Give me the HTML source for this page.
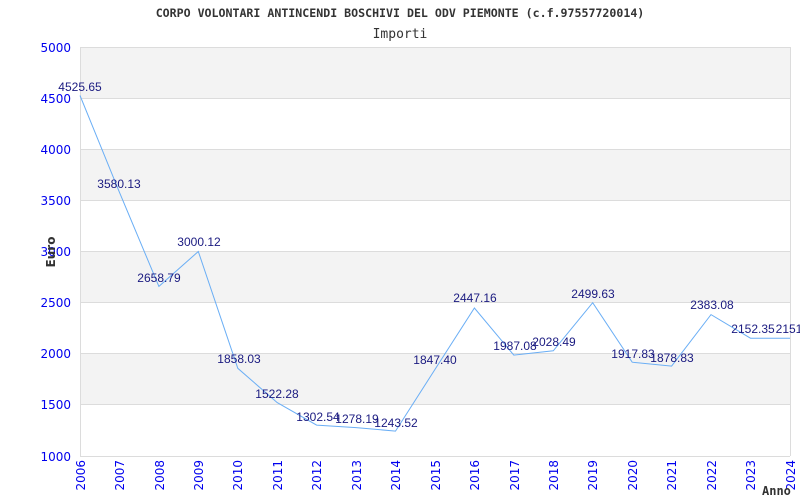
<!DOCTYPE html>
<html><head><style>body{margin:0;background:#fff}svg{display:block}</style></head><body>
<svg width="800" height="500" xmlns="http://www.w3.org/2000/svg">
<rect width="800" height="500" fill="#fff"/>
<g fill="#f3f3f3">
<rect x="80" y="47" width="710" height="51"/>
<rect x="80" y="149" width="710" height="51"/>
<rect x="80" y="251" width="710" height="51"/>
<rect x="80" y="353" width="710" height="52"/>
</g>
<g stroke="#dcdcdc" stroke-width="1">
<line x1="80" y1="47.5" x2="790" y2="47.5"/>
<line x1="80" y1="98.5" x2="790" y2="98.5"/>
<line x1="80" y1="149.5" x2="790" y2="149.5"/>
<line x1="80" y1="200.5" x2="790" y2="200.5"/>
<line x1="80" y1="251.5" x2="790" y2="251.5"/>
<line x1="80" y1="302.5" x2="790" y2="302.5"/>
<line x1="80" y1="353.5" x2="790" y2="353.5"/>
<line x1="80" y1="404.5" x2="790" y2="404.5"/>
<line x1="80" y1="456.5" x2="790" y2="456.5"/>
<line x1="80.5" y1="47" x2="80.5" y2="456"/>
<line x1="790.5" y1="47" x2="790.5" y2="456"/>
</g>
<text x="400" y="17" text-anchor="middle" font-family="DejaVu Sans Mono, monospace" font-size="11.6" font-weight="bold" fill="#333">CORPO VOLONTARI ANTINCENDI BOSCHIVI DEL ODV PIEMONTE (c.f.97557720014)</text>
<text x="400" y="38" text-anchor="middle" font-family="DejaVu Sans Mono, monospace" font-size="13" fill="#333">Importi</text>
<g font-family="DejaVu Sans, sans-serif" font-size="12" fill="#0000ee" text-anchor="end">
<text x="71" y="52">5000</text><text x="71" y="103">4500</text><text x="71" y="154">4000</text>
<text x="71" y="205">3500</text><text x="71" y="256">3000</text><text x="71" y="307">2500</text>
<text x="71" y="358">2000</text><text x="71" y="409">1500</text><text x="71" y="461">1000</text>
</g>
<g font-family="DejaVu Sans, sans-serif" font-size="12" fill="#0000ee" text-anchor="end">
<text transform="translate(85,460) rotate(-90)">2006</text>
<text transform="translate(124,460) rotate(-90)">2007</text>
<text transform="translate(164,460) rotate(-90)">2008</text>
<text transform="translate(203,460) rotate(-90)">2009</text>
<text transform="translate(242,460) rotate(-90)">2010</text>
<text transform="translate(282,460) rotate(-90)">2011</text>
<text transform="translate(321,460) rotate(-90)">2012</text>
<text transform="translate(361,460) rotate(-90)">2013</text>
<text transform="translate(400,460) rotate(-90)">2014</text>
<text transform="translate(440,460) rotate(-90)">2015</text>
<text transform="translate(479,460) rotate(-90)">2016</text>
<text transform="translate(519,460) rotate(-90)">2017</text>
<text transform="translate(558,460) rotate(-90)">2018</text>
<text transform="translate(597,460) rotate(-90)">2019</text>
<text transform="translate(637,460) rotate(-90)">2020</text>
<text transform="translate(676,460) rotate(-90)">2021</text>
<text transform="translate(716,460) rotate(-90)">2022</text>
<text transform="translate(755,460) rotate(-90)">2023</text>
<text transform="translate(795,460) rotate(-90)">2024</text>
</g>
<text transform="translate(55,252) rotate(-90)" text-anchor="middle" font-family="DejaVu Sans, sans-serif" font-size="12" font-weight="bold" fill="#333">Euro</text>
<text x="762" y="495" font-family="DejaVu Sans Mono, monospace" font-size="12" font-weight="bold" fill="#333">Anno</text>
<polyline fill="none" stroke="#6aaef5" stroke-width="1" points="80,95.5 119.4,192.2 158.9,286.4 198.3,251.5 237.8,368.3 277.2,402.6 316.6,425.1 356.1,427.6 395.5,431.1 435,369.4 474.4,308 513.8,355.1 553.3,350.8 592.7,302.7 632.2,362.2 671.6,366.1 711,314.6 750.5,338.2 790,338.3"/>
<g font-family="Liberation Sans, Arial, sans-serif" font-size="12" fill="#1a1a80" text-anchor="middle">
<text x="80" y="91">4525.65</text>
<text x="119" y="188">3580.13</text>
<text x="159" y="282">2658.79</text>
<text x="199" y="246">3000.12</text>
<text x="239" y="363">1858.03</text>
<text x="277" y="398">1522.28</text>
<text x="318" y="421">1302.54</text>
<text x="357" y="423">1278.19</text>
<text x="396" y="427">1243.52</text>
<text x="435" y="364">1847.40</text>
<text x="475" y="302">2447.16</text>
<text x="515" y="350">1987.08</text>
<text x="554" y="346">2028.49</text>
<text x="593" y="298">2499.63</text>
<text x="633" y="358">1917.83</text>
<text x="672" y="362">1878.83</text>
<text x="712" y="309">2383.08</text>
<text x="753" y="333">2152.35</text>
<text x="794" y="333">2151.2</text>
</g>
</svg>
</body></html>
